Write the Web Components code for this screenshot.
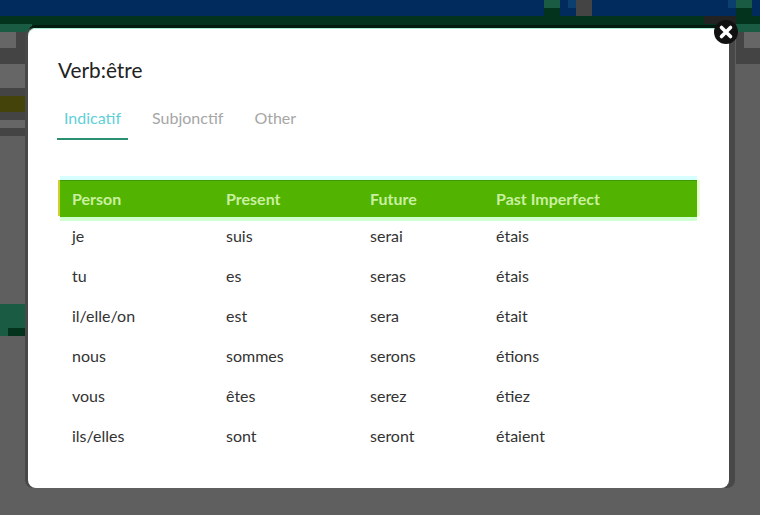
<!DOCTYPE html>
<html lang="fr">
<head>
<meta charset="utf-8">
<title>Verb</title>
<style>
  html, body { margin: 0; height: 100%; background: #5f5f5f; overflow: hidden; }
  body { font-family: Lato, "Liberation Sans", sans-serif; }
</style>
</head>
<body>
<page-behind></page-behind>
<verb-modal heading="Verb:être">
  <verb-tabs></verb-tabs>
  <verb-table></verb-table>
</verb-modal>

<script>
class PageBehind extends HTMLElement {
  constructor() {
    super();
    this.shadow = this.attachShadow({ mode: 'open' });
  }
  connectedCallback() {
    this.shadow.innerHTML = /*html*/`
      <style>
        :host { display: block; height: 515px; background: #5f5f5f; }
        .navy { display: flex; height: 16px; background: #002b5c; }
        .navy div { height: 8px; }
        .navy .sp1 { width: 544px; }
        .navy .gr { width: 16px; height: 16px; background: linear-gradient(#1a5c43 50%, #03331d 50%); }
        .navy .sp2 { width: 8px; }
        .navy .bl { width: 8px; background: #0a3f70; }
        .navy .gy { width: 16px; height: 16px; background: #444; }
        .navy .sp3 { width: 136px; }
        .green { display: flex; height: 8px; background: #03331d; }
        .green div { width: 32px; background: #222; margin-left: auto; margin-right: 24px; }
        .row { display: flex; justify-content: space-between; }
        .sub { display: flex; justify-content: space-between; height: 8px; background: #03331d; }
        .sub div { width: 32px; background: #1a5c43; }
        .sub div + div { width: 24px; }
        .l { width: 28px; }
        .r { width: 24px; }
        .g1 { height: 16px; background: linear-gradient(90deg, #666 16px, #444 16px); }
        .g1r { height: 16px; background: linear-gradient(90deg, #444 8px, #666 8px); }
        .g2 { height: 16px; background: #444; }
        .g3 { height: 24px; background: #666; }
        .g4 { height: 8px; background: #444; }
        .olive { height: 16px; background: #44440a; }
        .g5 { height: 8px; background: #666; }
        .teal { margin-top: 168px; padding: 24px 0 0 8px; background: #1a5c43; }
        .teal div { height: 8px; background: #03331d; }
      </style>
      <div class="navy">
        <div class="sp1"></div><div class="gr"></div><div class="sp2"></div>
        <div class="bl"></div><div class="gy"></div><div class="sp3"></div>
        <div class="bl"></div><div class="gr"></div>
      </div>
      <div class="green"><div></div></div>
      <div class="sub"><div></div><div></div></div>
      <div class="row">
        <div class="l">
          <div class="g1"></div><div class="g2"></div><div class="g3"></div>
          <div class="g4"></div><div class="olive"></div><div class="g4"></div>
          <div class="g5"></div><div class="g4"></div>
          <div class="teal"><div></div></div>
        </div>
        <div class="r">
          <div class="g1r"></div><div class="g2"></div>
        </div>
      </div>
    `;
  }
}

class VerbModal extends HTMLElement {
  constructor() {
    super();
    this.shadow = this.attachShadow({ mode: 'open' });
  }
  connectedCallback() {
    this.shadow.innerHTML = /*html*/`
      <style>
        :host {
          display: block;
          position: absolute;
          left: 28px;
          top: 28px;
          width: 701px;
          height: 460px;
          box-sizing: border-box;
          padding: 30px 30px 0 30px;
          background: #fff;
          border-radius: 8px;
          color: #222;
          box-shadow: -3px 0 0 #484848, 6px 0 0 #484848, 0 -3px 0 #021a10, inset 0 1px 0 #a8ecd6;
        }
        h2 {
          margin: 0 0 26px 0;
          font: 400 20.8px/24px Lato, "Liberation Sans", sans-serif;
          color: #222;
        }
        .close {
          position: absolute;
          right: -9px;
          top: -8px;
          width: 24px;
          height: 24px;
          border-radius: 50%;
          background: #111;
        }
        .close svg { display: block; width: 24px; height: 24px; }
      </style>
      <h2>${this.getAttribute('heading')}</h2>
      <slot></slot>
      <div class="close">
        <svg viewBox="0 0 24 24"><path d="M7.5 7.5l9 9M16.5 7.5l-9 9" stroke="#fff" stroke-width="3.6" stroke-linecap="round"/></svg>
      </div>
    `;
  }
}

class VerbTabs extends HTMLElement {
  constructor() {
    super();
    this.shadow = this.attachShadow({ mode: 'open' });
  }
  connectedCallback() {
    this.shadow.innerHTML = /*html*/`
      <style>
        :host {
          display: flex;
          gap: 17px;
          margin-left: -1px;
          font-size: 16px;
          line-height: 20px;
          color: #a6a6a6;
        }
        div { padding: 0 7px 10px 7px; }
        .on { color: #5fcfd8; border-bottom: 2px solid #2b8f72; }
      </style>
      <div class="on">Indicatif</div>
      <div>Subjonctif</div>
      <div>Other</div>
    `;
  }
}

const rows = [
  ['je', 'suis', 'serai', 'étais'],
  ['tu', 'es', 'seras', 'étais'],
  ['il/elle/on', 'est', 'sera', 'était'],
  ['nous', 'sommes', 'serons', 'étions'],
  ['vous', 'êtes', 'serez', 'étiez'],
  ['ils/elles', 'sont', 'seront', 'étaient'],
];

class VerbTable extends HTMLElement {
  constructor() {
    super();
    this.shadow = this.attachShadow({ mode: 'open' });
  }
  connectedCallback() {
    const cols = '154px 144px 126px 1fr';
    this.shadow.innerHTML = /*html*/`
      <style>
        :host {
          display: block;
          margin: 40px 2px 0 2px;
          font-size: 16px;
          color: #333;
        }
        .row {
          display: grid;
          grid-template-columns: ${cols};
          height: 40px;
          align-items: center;
          padding-left: 12px;
        }
        .head {
          box-sizing: border-box;
          height: 36px;
          margin-bottom: -1px;
          background: #52b400;
          color: #c9f0a0;
          font-weight: 700;
          border-top: 1px solid #3f9a00;
          box-shadow: -2px 0 0 #d0d030, 3px 0 0 #e8ffd0, 0 -4px 0 #d8ffff, 0 1px 0 #52b400, 0 5px 0 #d0ffd0;
        }
      </style>
      <div class="row head"><span>Person</span><span>Present</span><span>Future</span><span>Past Imperfect</span></div>
      ${rows.map(r => `<div class="row">${r.map(c => `<span>${c}</span>`).join('')}</div>`).join('')}
    `;
  }
}

customElements.define('page-behind', PageBehind);
customElements.define('verb-modal', VerbModal);
customElements.define('verb-tabs', VerbTabs);
customElements.define('verb-table', VerbTable);
</script>
</body>
</html>
